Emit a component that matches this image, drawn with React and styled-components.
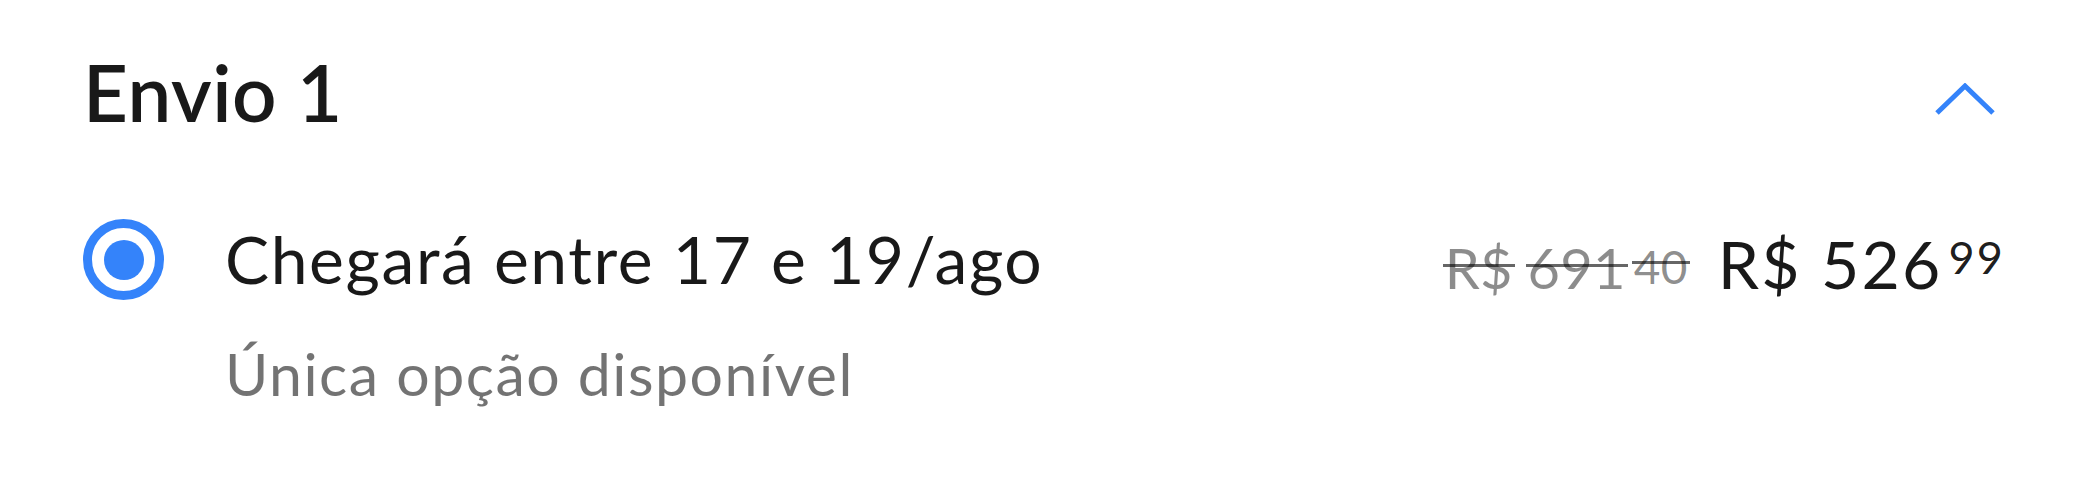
import React, { useState } from 'react';
import styled, { createGlobalStyle } from 'styled-components';

const GlobalStyle = createGlobalStyle`
  body {
    margin: 0;
    background: #fff;
    font-family: Lato, "Open Sans", sans-serif;
    color: rgba(0, 0, 0, 0.9);
  }
`;

const Shipment = styled.section`
  padding: 53px 84px 0 83px;
`;

const Header = styled.div`
  display: flex;
  justify-content: space-between;
  align-items: flex-start;
`;

const Title = styled.h2`
  margin: 0;
  font-size: 78px;
  line-height: 78px;
  font-weight: 600;
  letter-spacing: 0.5px;
`;

const Toggle = styled.button`
  border: 0;
  background: none;
  padding: 0;
  margin: 30px 9px 0 0;
  display: flex;
  cursor: pointer;
`;

const Option = styled.label`
  display: flex;
  align-items: flex-start;
  margin-top: 88px;
`;

const Radio = styled.span`
  box-sizing: border-box;
  width: 81px;
  height: 81px;
  flex: none;
  border-radius: 50%;
  border: 9px solid #3483fa;
  display: flex;
  align-items: center;
  justify-content: center;

  &::after {
    content: '';
    width: 40px;
    height: 40px;
    border-radius: 50%;
    background: ${p => (p.checked ? '#3483fa' : 'transparent')};
  }
`;

const Info = styled.div`
  flex: 1;
  margin-left: 61px;
`;

const Delivery = styled.div`
  font-size: 66px;
  line-height: 80px;
  letter-spacing: 1.6px;
`;

const Note = styled.div`
  margin-top: 40px;
  font-size: 59px;
  line-height: 70px;
  letter-spacing: 1.5px;
  color: rgba(0, 0, 0, 0.55);
`;

const Prices = styled.div`
  display: flex;
  align-items: baseline;
  line-height: 80px;
  margin-top: -2px;
`;

const OldPrice = styled.span`
  font-size: 56px;
  letter-spacing: 0.3px;
  color: rgba(0, 0, 0, 0.45);
  margin-right: 30px;
`;

/* each piece of the old price gets its own strike line, drawn at cap middle */
const Struck = styled.span`
  position: relative;
  font-size: ${p => p.size || 56}px;
  vertical-align: ${p => p.raise || 0}px;
  margin-left: ${p => p.gap || 0}px;

  &::after {
    content: '';
    position: absolute;
    left: -2px;
    right: -2px;
    top: ${p => p.line}px;
    height: 3px;
    background: rgba(0, 0, 0, 0.6);
  }
`;

const Price = styled.span`
  font-size: 66px;
  letter-spacing: 2.2px;
`;

const Cents = styled.span`
  font-size: 45px;
  vertical-align: 15px;
  margin-left: 6px;
`;

const ChevronUp = () => (
  <svg width="62" height="34" viewBox="0 0 62 34">
    <path d="M3 30 L31 3 L59 30" fill="none" stroke="#3483fa" strokeWidth="5" />
  </svg>
);

export default function App() {
  const [open, setOpen] = useState(true);

  return (
    <>
      <GlobalStyle />
      <Shipment>
        <Header>
          <Title>Envio 1</Title>
          <Toggle aria-label="Recolher" onClick={() => setOpen(!open)}>
            <ChevronUp />
          </Toggle>
        </Header>
        <Option>
          <Radio checked />
          <Info>
            <Delivery>Chegará entre 17 e 19/ago</Delivery>
            <Note>Única opção disponível</Note>
          </Info>
          <Prices>
            <OldPrice>
              <Struck line={30}>R$</Struck>{' '}
              <Struck line={30}>691</Struck>
              <Struck size={46} raise={5} gap={8} line={22}>40</Struck>
            </OldPrice>
            <Price>
              R$ 526<Cents>99</Cents>
            </Price>
          </Prices>
        </Option>
      </Shipment>
    </>
  );
}
